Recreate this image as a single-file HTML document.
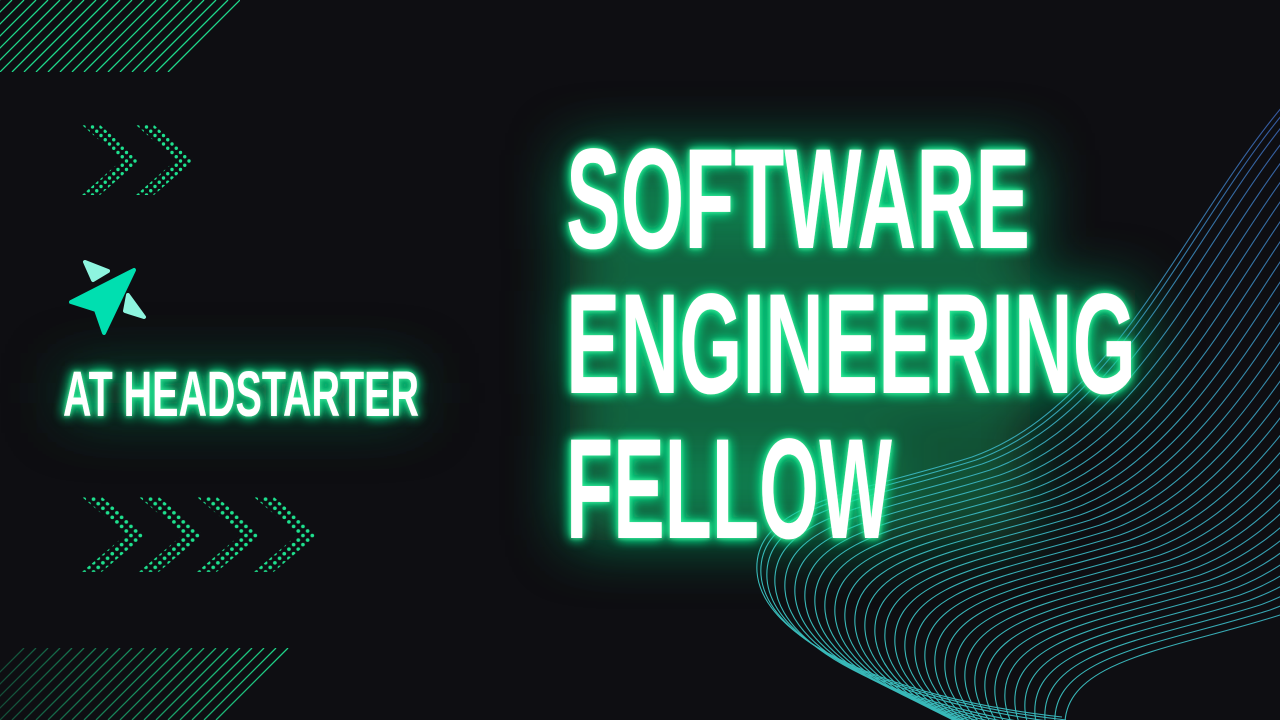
<!DOCTYPE html>
<html><head><meta charset="utf-8"><style>
html,body{margin:0;padding:0;background:#0e0e12;width:1280px;height:720px;overflow:hidden}
svg{display:block;position:absolute;left:0;top:0}
</style></head><body>
<svg width="1280" height="720" viewBox="0 0 1280 720" xmlns="http://www.w3.org/2000/svg">
<defs>
  <pattern id="dots" width="8.5" height="8.5" patternUnits="userSpaceOnUse">
    <circle cx="2" cy="2" r="1.7" fill="#1ee08e"/>
    <circle cx="6.25" cy="6.25" r="1.7" fill="#1ee08e"/>
  </pattern>
  <path id="chev" d="M0 0 L18 0 L58 35 L18 70 L0 70 L40 35 Z"/>
  <linearGradient id="waveg" x1="0" y1="1" x2="1" y2="0">
    <stop offset="0" stop-color="#3fd6cf"/>
    <stop offset="0.6" stop-color="#3aa8c0"/>
    <stop offset="1" stop-color="#3a5fae"/>
  </linearGradient>
  <linearGradient id="blfade" x1="0" x2="1">
    <stop offset="0" stop-color="#1ed78a" stop-opacity="0.2"/>
    <stop offset="1" stop-color="#1ed78a" stop-opacity="1"/>
  </linearGradient>
  <filter id="glow" x="-20%" y="-40%" width="140%" height="180%">
    <feGaussianBlur in="SourceAlpha" stdDeviation="6" result="b1"/>
    <feFlood flood-color="#18e08a"/>
    <feComposite in2="b1" operator="in" result="g1"/>
    <feGaussianBlur in="SourceAlpha" stdDeviation="2" result="b2"/>
    <feFlood flood-color="#3bf0a0"/>
    <feComposite in2="b2" operator="in" result="g2"/>
    <feMerge><feMergeNode in="g1"/><feMergeNode in="g1"/><feMergeNode in="g2"/><feMergeNode in="SourceGraphic"/></feMerge>
  </filter>
  <filter id="blur40" filterUnits="userSpaceOnUse" x="0" y="0" width="1280" height="720"><feGaussianBlur stdDeviation="30"/></filter>
  <path id="wv" d="M1300 120 C1200 240 1130 420 990 470 C880 505 770 515 775 585 C780 650 900 710 1080 730" fill="none" stroke="url(#waveg)" stroke-width="1.1"/>
  <clipPath id="tlclip"><rect x="0" y="0" width="240" height="72"/></clipPath>
  <clipPath id="blclip"><rect x="0" y="648" width="290" height="72"/></clipPath>
  <clipPath id="all"><rect x="0" y="0" width="1280" height="720"/></clipPath>
</defs>

<g clip-path="url(#all)">
<rect width="1280" height="720" fill="#0e0e12"/>

<g filter="url(#blur40)">
  <rect x="570" y="150" width="460" height="390" fill="#0f8a53" opacity="0.55"/>
  <rect x="1030" y="290" width="105" height="100" fill="#0f8a53" opacity="0.55"/>
  <rect x="570" y="155" width="460" height="90" fill="#12a060" opacity="0.6"/>
  <rect x="570" y="295" width="565" height="95" fill="#12a060" opacity="0.6"/>
  <rect x="570" y="440" width="320" height="95" fill="#12a060" opacity="0.6"/>
  <rect x="65" y="372" width="350" height="42" fill="#0b6a40" opacity="0.7"/>
</g>

<g opacity="0.9">
  <use href="#wv" transform="translate(-18,-13)"/>
  <use href="#wv" transform="translate(-14,-10)"/>
  <use href="#wv" transform="translate(-8,-6)"/>
  <use href="#wv" transform="translate(0,0)"/>
  <use href="#wv" transform="translate(10,5)"/>
  <use href="#wv" transform="translate(20,10)"/>
  <use href="#wv" transform="translate(30,15)"/>
  <use href="#wv" transform="translate(40,20)"/>
  <use href="#wv" transform="translate(50,25)"/>
  <use href="#wv" transform="translate(60,30)"/>
  <use href="#wv" transform="translate(70,35)"/>
  <use href="#wv" transform="translate(80,40)"/>
  <use href="#wv" transform="translate(90,45)"/>
  <use href="#wv" transform="translate(100,50)"/>
  <use href="#wv" transform="translate(110,55)"/>
  <use href="#wv" transform="translate(120,60)"/>
  <use href="#wv" transform="translate(130,65)"/>
  <use href="#wv" transform="translate(140,70)"/>
  <use href="#wv" transform="translate(150,75)"/>
  <use href="#wv" transform="translate(160,80)"/>
  <use href="#wv" transform="translate(170,85)"/>
  <use href="#wv" transform="translate(180,90)"/>
  <use href="#wv" transform="translate(190,95)"/>
  <use href="#wv" transform="translate(200,100)"/>
  <use href="#wv" transform="translate(210,105)"/>
  <use href="#wv" transform="translate(220,110)"/>
  <use href="#wv" transform="translate(230,115)"/>
  <use href="#wv" transform="translate(240,120)"/>
  <use href="#wv" transform="translate(250,125)"/>
  <use href="#wv" transform="translate(260,130)"/>
  <use href="#wv" transform="translate(270,135)"/>
  <use href="#wv" transform="translate(280,140)"/>
  <use href="#wv" transform="translate(290,145)"/>
</g>

<g clip-path="url(#tlclip)" stroke="#1ed78a" stroke-width="1.3">
  <path d="M-72 72 L0 0 M-60 72 L12 0 M-48 72 L24 0 M-36 72 L36 0 M-24 72 L48 0 M-12 72 L60 0 M0 72 L72 0 M12 72 L84 0 M24 72 L96 0 M36 72 L108 0 M48 72 L120 0 M60 72 L132 0 M72 72 L144 0 M84 72 L156 0 M96 72 L168 0 M108 72 L180 0 M120 72 L192 0 M132 72 L204 0 M144 72 L216 0 M156 72 L228 0 M168 72 L240 0"/>
</g>

<g clip-path="url(#blclip)" stroke="url(#blfade)" stroke-width="1.3">
  <path d="M-48 720 L24 648 M-36 720 L36 648 M-24 720 L48 648 M-12 720 L60 648 M0 720 L72 648 M12 720 L84 648 M24 720 L96 648 M36 720 L108 648 M48 720 L120 648 M60 720 L132 648 M72 720 L144 648 M84 720 L156 648 M96 720 L168 648 M108 720 L180 648 M120 720 L192 648 M132 720 L204 648 M144 720 L216 648 M156 720 L228 648 M168 720 L240 648 M180 720 L252 648 M192 720 L264 648 M204 720 L276 648 M216 720 L288 648"/>
</g>

<g fill="url(#dots)">
  <use href="#chev" transform="translate(82,125)"/>
  <use href="#chev" transform="translate(136,125)"/>
  <use href="#chev" transform="translate(82,497) scale(1.1,1.07)"/>
  <use href="#chev" transform="translate(139,497) scale(1.1,1.07)"/>
  <use href="#chev" transform="translate(197,497) scale(1.1,1.07)"/>
  <use href="#chev" transform="translate(254,497) scale(1.1,1.07)"/>
</g>

<g stroke-linejoin="round" stroke-width="4">
  <path d="M71 302 L134 270 L104 333 L96 310 Z" fill="#00dfb0" stroke="#00dfb0"/>
  <path d="M85 262 L108 271 L93 280 Z" fill="#8ef5df" stroke="#8ef5df"/>
  <path d="M128 295 L144 317 L125 311 Z" fill="#8ef5df" stroke="#8ef5df"/>
</g>

<g filter="url(#glow)" fill="#ffffff" font-family="'Liberation Sans Narrow','Liberation Sans',sans-serif" font-weight="bold">
  <text x="63" y="416" font-size="64" textLength="356" lengthAdjust="spacingAndGlyphs">AT HEADSTARTER</text>
  <text x="566" y="248" font-size="143" textLength="464" lengthAdjust="spacingAndGlyphs">SOFTWARE</text>
  <text x="566" y="393" font-size="143" textLength="570" lengthAdjust="spacingAndGlyphs">ENGINEERING</text>
  <text x="566" y="538" font-size="143" textLength="326" lengthAdjust="spacingAndGlyphs">FELLOW</text>
</g>
</g>
</svg>
</body></html>
